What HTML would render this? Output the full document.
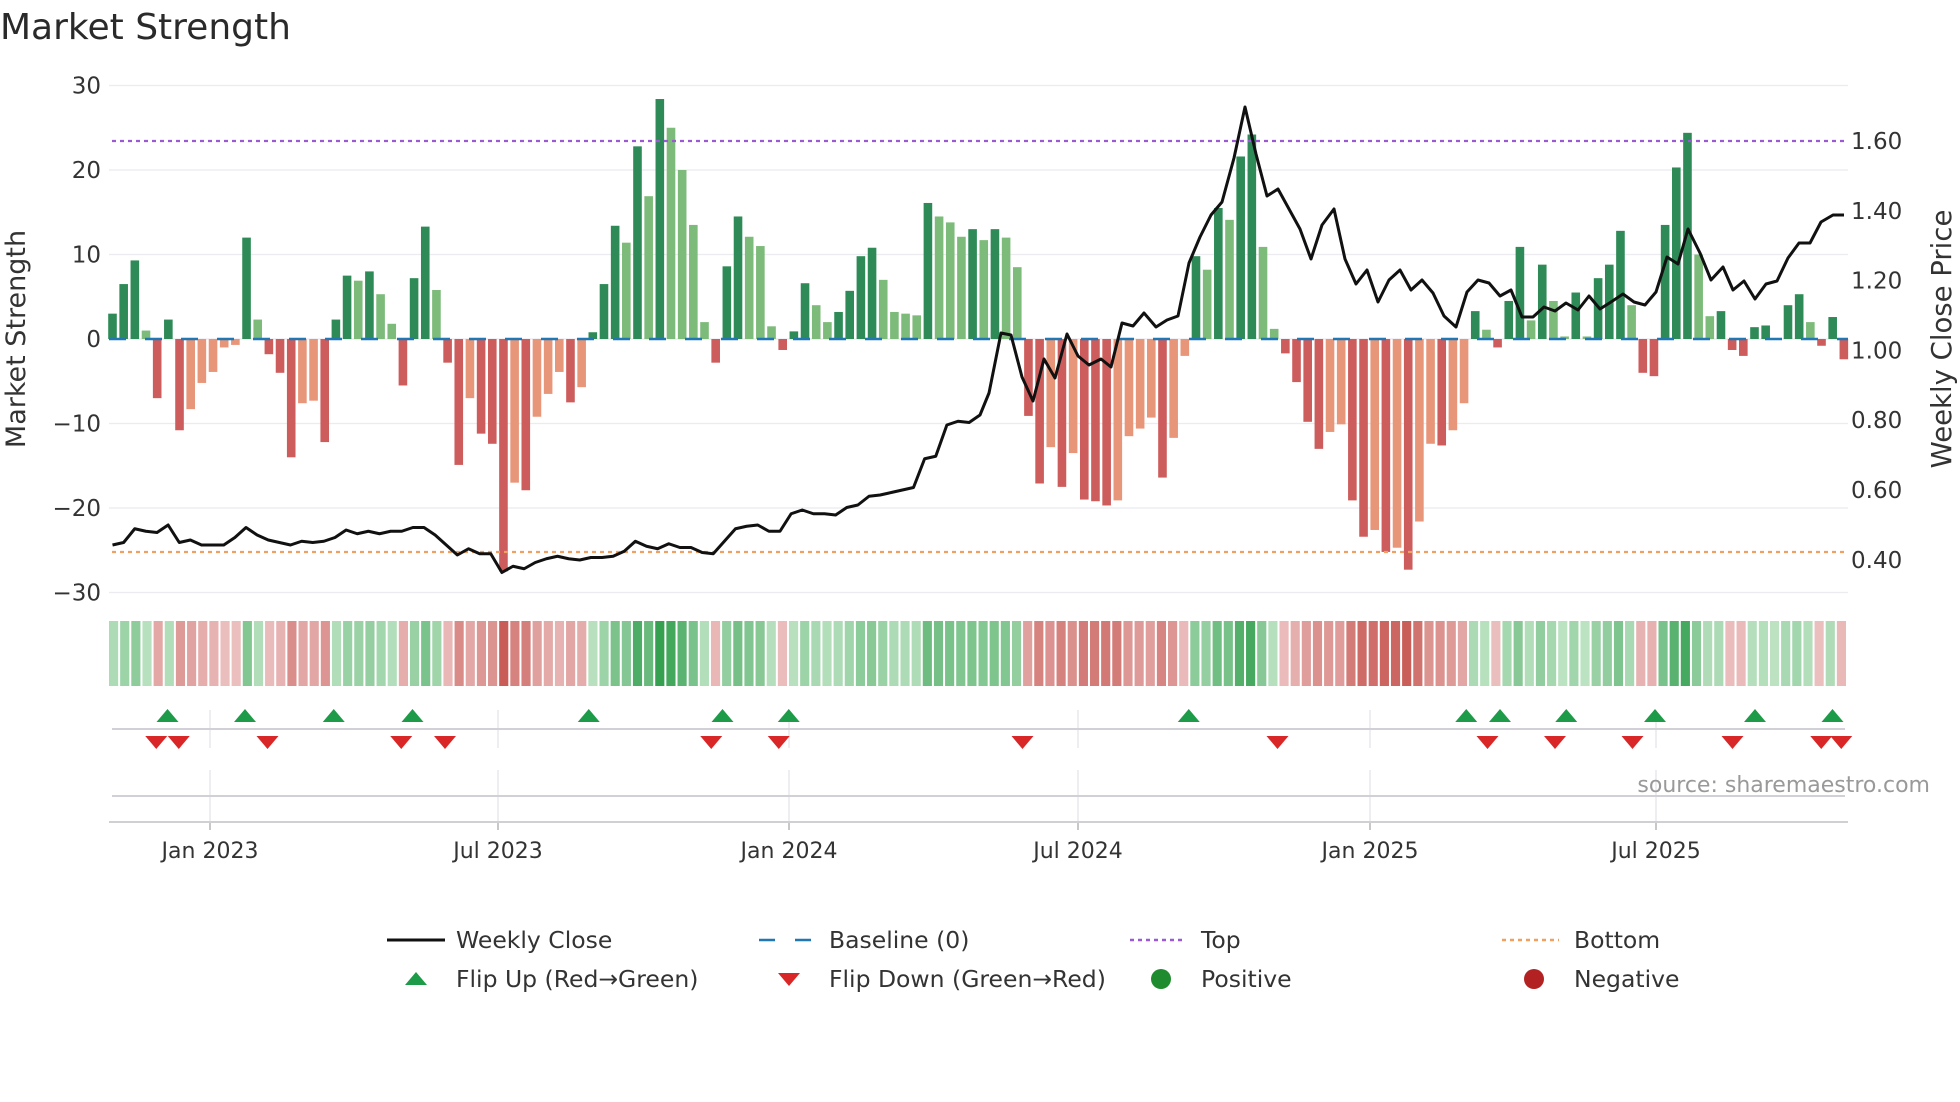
<!DOCTYPE html>
<html><head><meta charset="utf-8">
<style>
html,body{margin:0;padding:0;background:#fff;width:1960px;height:1102px;overflow:hidden}
svg text{font-family:"DejaVu Sans","Liberation Sans",sans-serif}
</style></head>
<body>
<svg id="s" width="1960" height="1102" xmlns="http://www.w3.org/2000/svg">
<text x="0" y="39" font-size="36" fill="#2a2a2a">Market Strength</text>
</svg>
<script>
const S=document.getElementById('s');let h='';
const vals=[3,6.5,9.3,1,-7,2.3,-10.8,-8.3,-5.2,-3.9,-1,-0.7,12,2.3,-1.8,-4,-14,-7.6,-7.3,-12.2,2.3,7.5,6.9,8,5.3,1.8,-5.5,7.2,13.3,5.8,-2.8,-14.9,-7,-11.2,-12.4,-27.5,-17,-17.9,-9.2,-6.5,-3.9,-7.5,-5.7,0.8,6.5,13.4,11.4,22.8,16.9,28.4,25,20,13.5,2,-2.8,8.6,14.5,12.1,11,1.5,-1.3,0.9,6.6,4,2,3.2,5.7,9.8,10.8,7,3.2,3,2.8,16.1,14.5,13.8,12.1,13,11.7,13,12,8.5,-9.1,-17.1,-12.8,-17.5,-13.5,-19,-19.2,-19.7,-19.1,-11.5,-10.6,-9.3,-16.4,-11.7,-2,9.8,8.2,15.5,14.1,21.6,24.2,10.9,1.2,-1.7,-5.1,-9.8,-13,-11,-10.1,-19.1,-23.4,-22.6,-25.2,-24.7,-27.3,-21.6,-12.4,-12.6,-10.8,-7.6,3.3,1.1,-1,4.5,10.9,2.2,8.8,4.5,0.3,5.5,0.3,7.2,8.8,12.8,4,-4,-4.4,13.5,20.3,24.4,10,2.7,3.3,-1.3,-2,1.4,1.6,0,4,5.3,2,-0.8,2.6,-2.4];
const light=new Set([3,7,8,9,10,11,13,17,18,22,24,25,29,32,36,38,39,40,42,46,48,50,51,52,53,57,58,59,63,64,69,70,71,72,74,75,76,78,80,81,84,86,90,91,92,93,95,96,98,100,103,104,109,110,113,115,117,118,120,121,123,127,129,130,132,136,142,143,152]);
const X0=112.5,DX=11.17,Y0=339,U=8.45;
for(let v=-30;v<=30;v+=10){const y=Y0-v*U;h+=`<line x1="109" x2="1848" y1="${y}" y2="${y}" stroke="#ebebf0" stroke-width="1.3"/>`;
h+=`<text x="101" y="${y+8}" font-size="23" text-anchor="end" fill="#333" font-family="DejaVu Sans Condensed,DejaVu Sans,sans-serif">${v<0?'\u2212'+(-v):v}</text>`;}
const rt=['1.60','1.40','1.20','1.00','0.80','0.60','0.40'];
rt.forEach((t,i)=>{const y=141+i*69.8;h+=`<text x="1851" y="${y+8}" font-size="23" fill="#333" font-family="DejaVu Sans Condensed,DejaVu Sans,sans-serif">${t}</text>`;});
h+=`<text transform="translate(25,339) rotate(-90)" font-size="27" text-anchor="middle" fill="#333">Market Strength</text>`;
h+=`<text transform="translate(1951,339) rotate(-90)" font-size="27.5" text-anchor="middle" fill="#333">Weekly Close Price</text>`;
vals.forEach((v,i)=>{const x=X0+i*DX-4.3;const l=light.has(i);let c;
 if(v>=0)c=l?'#7dbb7a':'#2e8b57';else c=l?'#e8967a':'#cd5c5c';
 if(Math.abs(v)<0.05)return;const y=v>=0?Y0-v*U:Y0;h+=`<rect x="${x}" y="${y}" width="8.6" height="${Math.abs(v)*U}" fill="${c}"/>`;});
h+=`<line x1="109" x2="1848" y1="${Y0}" y2="${Y0}" stroke="#1f77b4" stroke-width="2.4" stroke-dasharray="17 19"/>`;
h+=`<line x1="112" x2="1848" y1="141" y2="141" stroke="#9b59d6" stroke-width="2.2" stroke-dasharray="4 4"/>`;
h+=`<line x1="112" x2="1848" y1="552" y2="552" stroke="#f0a060" stroke-width="2.2" stroke-dasharray="4 4"/>`;
const fy=[436,434,423,425,426,420,434,432,436,436,436,430,422,428,432,434,436,433,434,433,430,424,427,425,427,425,425,422,422,428,436,444,439,443,443,458,453,455,450,447,445,447,448,446,446,445,441,433,437,439,435,438,438,442,443,433,423,421,420,425,425,411,408,411,411,412,406,404,397,396,394,392,390,367,365,340,337,338];
let pts=fy.map((y,i)=>`${X0+i*11.125},${y*1.25}`);
const z=[[980,415],[989,393],[1001,333],[1011,335],[1022,377],[1033,401],[1044,359],[1055,378],[1067,334],[1078,356],[1089,365],[1101,359],[1111,367],[1122,323],[1133,326],[1144,313],[1156,327],[1167,320],[1178,316],[1189,263],[1200,237],[1211,215],[1222,202],[1234,158],[1245,107],[1256,154],[1267,196],[1278,189],[1289,209],[1300,229],[1311,259],[1322,225],[1334,209],[1345,259],[1356,284],[1367,270],[1378,302],[1389,280],[1400,270],[1411,290],[1422,280],[1433,293],[1444,316],[1456,327],[1467,292],[1478,280],[1489,283],[1500,296],[1511,290],[1522,317],[1533,317],[1544,307],[1555,311],[1566,303],[1578,310],[1589,296],[1600,309],[1611,302],[1623,294],[1634,302],[1645,305],[1656,292],[1667,257],[1678,264],[1688,229],[1700,253],[1711,280],[1723,267],[1733,290],[1744,281],[1755,299],[1766,284],[1777,281],[1788,258],[1799,243],[1810,243],[1821,222],[1833,215],[1844,215]];
pts=pts.concat(z.map(p=>p.join(',')));
h+=`<polyline points="${pts.join(' ')}" fill="none" stroke="#111" stroke-width="3" stroke-linejoin="round"/>`;
function mix(a,b,t){return `rgb(${a.map((c,i)=>Math.round(c+(b[i]-c)*t)).join(',')})`}
const CW=(1848-109)/vals.length;
vals.forEach((v,i)=>{const x=109+i*CW;const t=Math.min(1,0.15+Math.abs(v)/28*0.85);
 const c=v>=0?mix([212,238,214],[52,160,80],t):mix([242,212,212],[200,90,85],t);
 h+=`<rect x="${x}" y="621" width="${CW-2}" height="65" fill="${c}"/>`;});
const tx=[210,498,789,1078,1370,1656],tl=['Jan 2023','Jul 2023','Jan 2024','Jul 2024','Jan 2025','Jul 2025'];
tx.forEach((x,i)=>{h+=`<line x1="${x}" x2="${x}" y1="710" y2="748" stroke="#e4e4ea" stroke-width="1.3"/><line x1="${x}" x2="${x}" y1="770" y2="822" stroke="#e4e4ea" stroke-width="1.3"/><line x1="${x}" x2="${x}" y1="822" y2="830" stroke="#aaa" stroke-width="1.3"/>`;
 h+=`<text x="${x}" y="858" font-size="22" text-anchor="middle" fill="#333">${tl[i]}</text>`;});
h+=`<line x1="112" x2="1845" y1="729" y2="729" stroke="#d0d0d6" stroke-width="2"/>`;
h+=`<line x1="112" x2="1845" y1="796" y2="796" stroke="#d0d0d6" stroke-width="2"/>`;
h+=`<line x1="109" x2="1848" y1="822" y2="822" stroke="#cfcfd4" stroke-width="2"/>`;
const up=[134,196,267,330,471,578,631,951,1173,1200,1253,1324,1404,1466],dn=[125,143,214,321,356,569,623,818,1022,1190,1244,1306,1386,1457,1473];
up.forEach(f=>{const x=f*1.25;h+=`<polygon points="${x-11},722 ${x+11},722 ${x},709" fill="#1e9b48"/>`;});
dn.forEach(f=>{const x=f*1.25;h+=`<polygon points="${x-11},736 ${x+11},736 ${x},749" fill="#d92626"/>`;});
h+=`<text x="1930" y="792" font-size="22" text-anchor="end" fill="#999">source: sharemaestro.com</text>`;
const L=(t,x,y)=>`<text x="${x}" y="${y+8}" font-size="23.5" fill="#333">${t}</text>`;
h+=`<line x1="387" x2="445" y1="940" y2="940" stroke="#111" stroke-width="3"/>`+L('Weekly Close',456,940);
h+=`<line x1="759" x2="815" y1="940" y2="940" stroke="#1f77b4" stroke-width="2.5" stroke-dasharray="16 20"/>`+L('Baseline (0)',829,940);
h+=`<line x1="1130" x2="1185" y1="940" y2="940" stroke="#9b59d6" stroke-width="2.5" stroke-dasharray="4 4"/>`+L('Top',1201,940);
h+=`<line x1="1502" x2="1559" y1="940" y2="940" stroke="#f0a060" stroke-width="2.5" stroke-dasharray="4 4"/>`+L('Bottom',1574,940);
h+=`<polygon points="405,985 427,985 416,972" fill="#1e9b48"/>`+L('Flip Up (Red\u2192Green)',456,979);
h+=`<polygon points="778,973 800,973 789,986" fill="#d92626"/>`+L('Flip Down (Green\u2192Red)',829,979);
h+=`<circle cx="1161" cy="979" r="10" fill="#1e8c2e"/>`+L('Positive',1201,979);
h+=`<circle cx="1534" cy="979" r="10" fill="#b22222"/>`+L('Negative',1574,979);
S.insertAdjacentHTML('beforeend',h);
</script>
</body></html>
